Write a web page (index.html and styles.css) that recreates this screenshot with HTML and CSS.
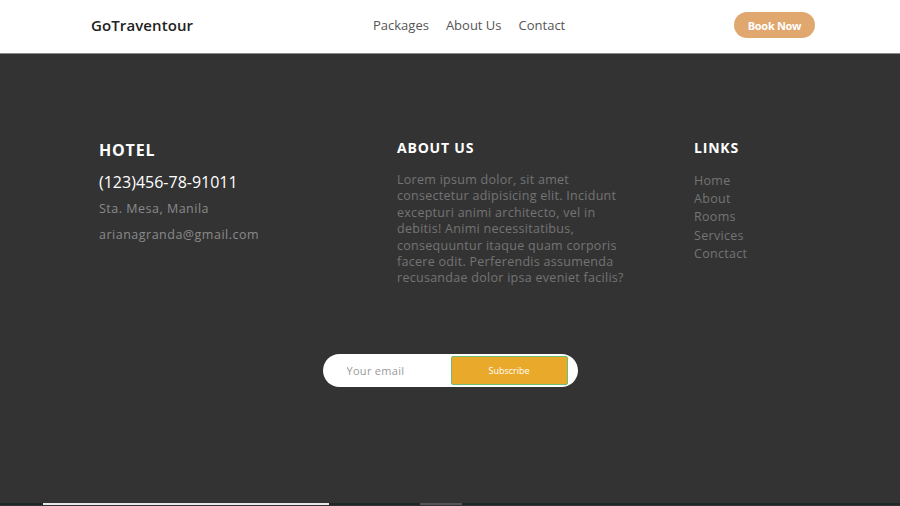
FILE: index.html
```html
<!DOCTYPE html>
<html lang="en">
<head>
<meta charset="utf-8">
<title>GoTraventour</title>
<link rel="stylesheet" href="styles.css">
</head>
<body>
<header class="topbar">
  <div class="logo">GoTraventour</div>
  <nav class="nav">
    <a href="#">Packages</a>
    <a href="#">About Us</a>
    <a href="#">Contact</a>
  </nav>
  <a class="book" href="#">Book Now</a>
</header>
<footer class="footer">
  <div class="cols">
    <div class="col">
      <h3 class="h-hotel">HOTEL</h3>
      <p class="phone">(123)456-78-91011</p>
      <p class="muted">Sta. Mesa, Manila</p>
      <p class="muted">arianagranda@gmail.com</p>
    </div>
    <div class="col">
      <h3 class="h-col">ABOUT US</h3>
      <p class="about">Lorem ipsum dolor, sit amet<br>consectetur adipisicing elit. Incidunt<br>excepturi animi architecto, vel in<br>debitis! Animi necessitatibus,<br>consequuntur itaque quam corporis<br>facere odit. Perferendis assumenda<br>recusandae dolor ipsa eveniet facilis?</p>
    </div>
    <div class="col">
      <h3 class="h-col">LINKS</h3>
      <ul class="links">
        <li>Home</li>
        <li>About</li>
        <li>Rooms</li>
        <li>Services</li>
        <li>Conctact</li>
      </ul>
    </div>
  </div>
  <form class="subscribe">
    <input class="email" type="text" placeholder="Your email">
    <button class="sub-btn" type="button">Subscribe</button>
  </form>
  <div class="bottom">
    <span class="bar-a"></span>
    <span class="bar-b"></span>
  </div>
</footer>
</body>
</html>
```
FILE: styles.css
```css
* { box-sizing: border-box; }
html, body { margin: 0; padding: 0; }
body {
  font-family: "Open Sans", "Lato", sans-serif;
  background: #333333;
  width: 900px;
  height: 506px;
  overflow: hidden;
}
.topbar {
  height: 54px;
  background: #ffffff;
  border-bottom: 1px solid #8a8a8a;
  display: flex;
  align-items: center;
  padding: 0 85px 3px 91px;
}
.logo {
  font-size: 15px;
  font-weight: 600;
  color: #222;
  width: 282px;
  letter-spacing: 0.1px;
}
.nav {
  display: flex;
  gap: 17px;
  flex: 1;
}
.nav a {
  font-size: 13px;
  color: #555;
  text-decoration: none;
}
.book {
  background: #e0a76e;
  color: #fff;
  font-size: 11px;
  font-weight: 700;
  text-decoration: none;
  height: 26px;
  width: 81px;
  border-radius: 13px;
  display: flex;
  align-items: center;
  justify-content: center;
  letter-spacing: -0.3px;
}
.footer {
  height: 451px;
  display: flex;
  flex-direction: column;
}
.cols {
  display: grid;
  grid-template-columns: 298px 297px 1fr;
  padding: 85px 0 0 99px;
}
.col h3 { margin: 0; color: #fff; font-weight: 700; letter-spacing: 0.8px; }
.h-hotel { font-size: 16px; line-height: 20px; margin-top: 1px !important; }
.h-col { font-size: 14px; line-height: 18px; }
.phone {
  margin: 12px 0 0;
  font-size: 16px;
  color: #fff;
  line-height: 20px;
}
.muted {
  margin: 8px 0 0;
  font-size: 12.5px;
  letter-spacing: 0.5px;
  color: #8a8a8a;
  line-height: 18px;
}
.about {
  margin: 15px 0 0;
  white-space: nowrap;
  font-size: 12.5px;
  letter-spacing: 0.28px;
  line-height: 16.4px;
  color: #747474;
}
.links {
  list-style: none;
  margin: 15px 0 0;
  padding: 0;
}
.links li {
  font-size: 12.5px;
  letter-spacing: 0.3px;
  line-height: 18.2px;
  color: #747474;
}
.subscribe {
  margin: 67px auto 0;
  width: 255px;
  height: 33px;
  background: #fff;
  border-radius: 17px;
  display: flex;
  align-items: center;
  padding: 0 10px 0 24px;
}
.email {
  border: none;
  outline: none;
  background: transparent;
  font-family: inherit;
  font-size: 11px;
  letter-spacing: 0.3px;
  width: 104px;
  padding: 0;
  color: #444;
}
.email::placeholder { color: #9a9a9a; }
.sub-btn {
  width: 117px;
  height: 29px;
  background: #e9aa2b;
  border: 1px solid #6cc070;
  border-radius: 2px;
  color: #fff;
  font-family: inherit;
  font-size: 9px;
  padding: 0;
}
.bottom {
  margin-top: auto;
  height: 2px;
  background: #1e2826;
  position: relative;
}
.bar-a, .bar-b { position: absolute; top: 0; height: 2px; }
.bar-a { left: 43px; width: 286px; background: #e8e8e8; }
.bar-b { left: 420px; width: 42px; background: #555; }
```
